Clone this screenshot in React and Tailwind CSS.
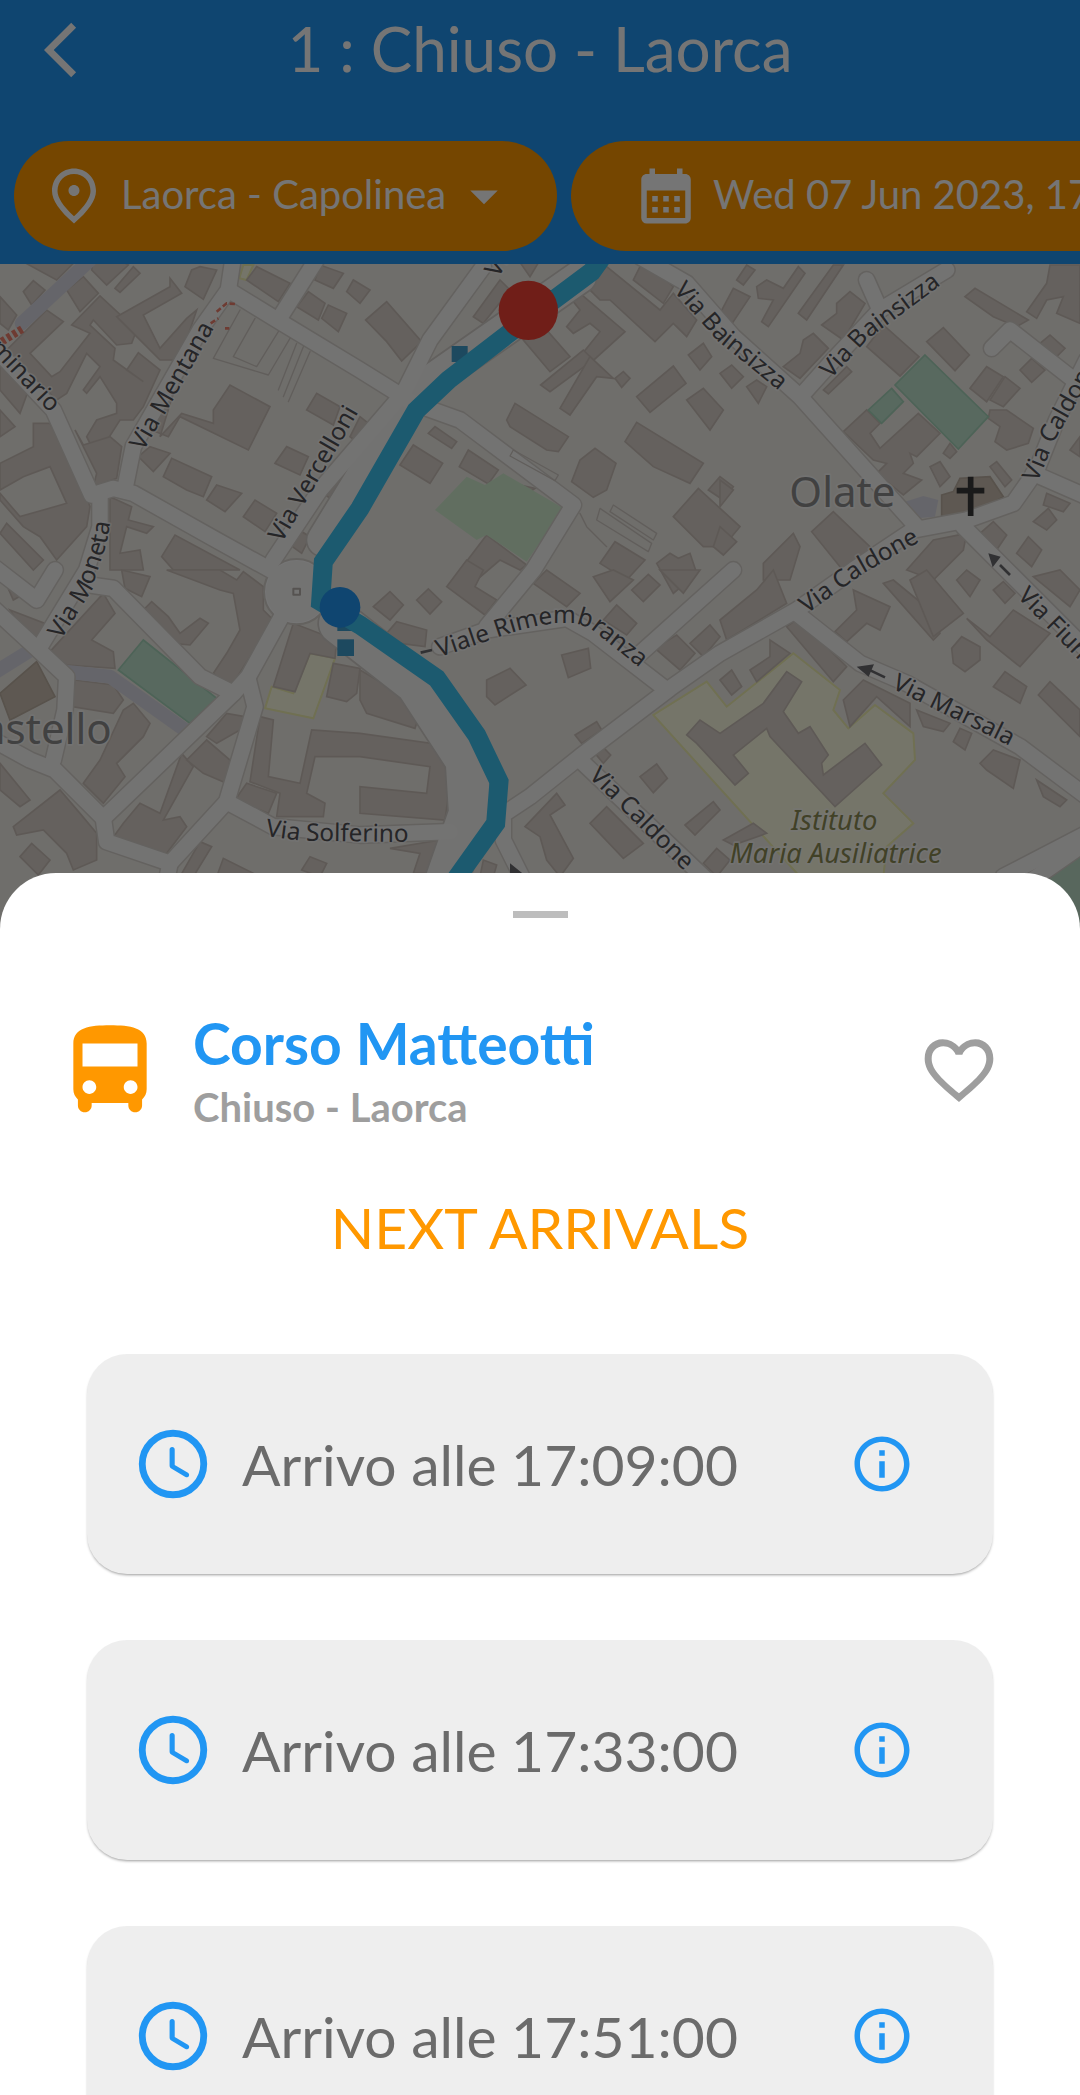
import { useState } from 'react';
import { MdArrowBackIos, MdArrowDropDown, MdCalendarMonth, MdInfoOutline, MdOutlineFmdGood } from 'react-icons/md';

const arrivals = ['17:09:00', '17:33:00', '17:51:00'];

const roads = [
    'M-20 260 L160 450 L275 705 L340 685 L400 700 L640 835 L830 940',
    'M700 -10 L685 90 L600 210 L400 560 L375 685',
    'M300 700 L300 800 L260 930 L120 1160',
    'M685 90 L840 185 L1080 330 L1240 430 L1380 480 L1720 735 L1600 930 L1460 1100',
    'M835 180 L955 -10',
    'M820 900 L960 690 L1210 400 L1290 240 L1450 20',
    'M-20 1045 L110 1165 L200 1250 L195 1350 L160 1500',
    'M-20 920 L110 1020 L165 930',
    'M-20 1440 L90 1500 L165 1530 L310 1675 L320 1745 L510 1810 L680 1625 L765 1340 L745 1260',
    'M310 1675 L700 1300 L745 1250 L850 1060',
    'M270 975 L340 985 L600 1250 L700 1300',
    'M680 1625 L820 1700 L1080 1725 L1350 1715',
    'M510 1810 L470 2010',
    'M1320 1160 L1460 1110 L1700 1075 L1780 1120 L2000 1290',
    'M1910 1190 L2200 930',
    'M1500 1670 L1590 1610 L1740 1490 L2010 1285 L2160 1180 L2390 1050 L2560 930 L2740 810 L2900 780 L3040 730 L3110 630 L3170 480 L3260 300',
    'M1740 1500 L2120 1860',
    'M1510 1680 L1510 1740 L1570 1860',
    'M1920 -10 L2060 70 L2200 230 L2400 410 L2750 800',
    'M2410 400 L2500 300 L2640 150 L2600 60',
    'M2640 150 L2840 30',
    'M2975 265 L3030 210 L3260 390',
    'M3100 640 L3260 710',
    'M2890 800 L3020 930 L3260 1170',
    'M2390 1060 L2580 1210 L2720 1270 L3060 1460 L3260 1610',
    'M3010 1850 L3260 1720',
    'M3240 1760 L3040 1900',
];

const walkways = ['M270 0 L65 190', 'M195 1235 L330 1250 L555 1410', 'M-20 1240 L85 1175'];

const buildings = [
    // north-west block
    'M60 0 L230 0 L170 60 Z', 'M70 95 L100 62 L135 90 L95 135 Z', 'M0 110 L50 165 L25 210 L0 190 Z',
    'M200 90 L250 50 L295 100 L240 155 Z', 'M275 30 L320 75 L385 15 L360 0 L280 0 Z', 'M345 85 L400 20 L420 40 L360 97 Z',
    'M0 290 L140 150 L190 185 L90 280 L155 350 L180 335 L270 220 L215 195 L300 108 L410 210 L395 250 L350 255 L280 180 L270 195 L345 265 L340 300 L430 365 L380 330 L415 278 L480 330 L430 440 L400 480 L360 480 L290 590 L260 530 L290 480 L350 460 L350 430 L300 350 L260 400 L250 390 L300 320 L260 280 L200 400 L170 420 L100 350 L60 460 L0 390 Z',
    'M510 55 L545 100 L430 165 L480 265 L560 175 L590 150 L540 300 L480 300 L350 170 L510 80 Z',
    'M600 20 L650 30 L610 118 L555 80 L575 30 Z', 'M480 530 L545 460 L640 490 L640 450 L690 375 L810 440 L745 570 L540 470 L505 530 L430 500 L520 400 Z',
    'M740 60 L770 20 L870 70 L835 125 Z', 'M960 15 L1030 40 L1000 85 L945 60 Z', 'M890 140 L925 95 L975 130 L955 180 Z',
    'M965 175 L985 135 L1040 160 L1015 215 Z', 'M1040 95 L1060 60 L1110 90 L1080 130 Z', 'M920 450 L950 400 L1020 440 L1000 495 Z',
    'M825 610 L860 560 L925 590 L900 645 Z', 'M950 690 L975 640 L1025 660 L1000 720 Z', 'M730 770 L765 720 L830 760 L795 815 Z',
    'M850 840 L880 800 L930 830 L905 880 Z', 'M415 590 L450 560 L510 580 L460 635 Z', 'M490 650 L515 595 L635 650 L610 710 L560 690 Z',
    'M620 720 L650 675 L725 700 L675 755 Z', 'M100 490 L150 490 L250 680 L270 740 L260 800 L170 900 L120 830 L70 800 L0 720 L0 700 L60 770 L200 730 L150 620 L70 650 L0 690 L0 610 L100 560 Z',
    'M225 510 L290 640 L280 680 L350 655 L365 560 L330 530 L250 555 Z', 'M330 710 L395 740 L385 780 L460 800 L440 820 L380 800 L360 880 L420 870 L430 930 L330 930 Z',
    'M485 890 L525 825 L720 930 L520 930 Z', 'M0 820 L20 790 L130 900 L100 930 Z', 'M0 450 L45 500 L0 530 Z',
    // park side
    'M1097 180 L1160 125 L1265 245 L1205 303 L1160 245 Z', 'M1080 470 L1118 500 L1090 560 L1050 530 Z',
    'M1420 170 L1500 60 L1530 90 L1450 190 Z', 'M1555 0 L1620 0 L1590 50 Z', 'M1760 80 L1820 20 L1980 150 L2020 100 L2090 180 L2060 230 L2020 190 L1965 245 L1830 120 L1800 120 Z',
    'M1930 0 L2020 80 L1990 130 L1900 60 Z', 'M1700 100 L1740 100 L1875 215 L1770 310 L1740 290 L1800 215 L1770 190 L1720 220 L1700 200 L1740 150 Z',
    'M1570 240 L1640 210 L1710 290 L1650 335 Z', 'M1622 375 L1750 270 L1780 300 L1650 395 Z', 'M1680 445 L1770 290 L1840 355 L1790 350 L1710 465 Z', 'M1845 355 L1870 335 L1890 355 L1865 382 Z',
    'M1910 410 L2020 318 L2058 370 L1950 457 Z', 'M2060 420 L2110 385 L2170 450 L2130 510 Z', 'M2065 285 L2110 250 L2135 290 L2100 330 Z',
    'M1520 480 L1545 430 L1705 530 L1675 575 L1640 570 L1530 500 Z', 'M1875 545 L1910 487 L2110 610 L2070 670 L1960 620 Z',
    'M1715 665 L1740 600 L1785 565 L1848 610 L1820 690 L1780 712 Z', 'M1285 520 L1305 500 L1370 545 L1355 565 Z', 'M1200 615 L1240 555 L1328 610 L1290 670 Z',
    'M1378 620 L1405 570 L1495 630 L1465 672 Z', 'M1560 675 L1605 685 L1590 695 Z', 'M2020 770 L2095 685 L2220 800 L2170 860 L2110 860 Z',
    'M2125 690 L2160 650 L2200 680 L2170 720 Z', 'M1380 930 L1460 825 L1580 915 L1560 930 L1500 900 L1430 960 Z', 'M1800 910 L1845 845 L1935 900 L1880 960 Z',
    'M1970 910 L2010 880 L2035 895 L2070 880 L2090 940 L2020 1000 Z', 'M1340 980 L1400 900 L1450 930 L1425 980 L1490 1020 L1455 1065 Z',
    // north-east block
    'M2210 60 L2240 15 L2265 30 L2230 75 Z', 'M2160 160 L2200 85 L2250 110 L2190 200 Z', 'M2270 80 L2300 60 L2350 85 L2395 20 L2415 40 L2305 200 L2285 185 L2320 120 L2275 115 Z',
    'M2395 160 L2500 15 L2530 15 L2420 180 Z', 'M2465 195 L2510 160 L2510 130 L2550 95 L2595 130 L2530 240 Z', 'M2350 320 L2400 280 L2410 240 L2440 220 L2485 265 L2400 355 Z',
    'M2600 260 L2650 195 L2757 290 L2700 348 Z',
    'M2160 340 L2195 315 L2230 350 L2195 385 Z', 'M2240 380 L2270 360 L2300 380 L2275 430 Z', 'M2470 390 L2540 320 L2555 335 L2485 402 Z',
    'M2780 245 L2830 203 L2908 285 L2865 332 Z', 'M2895 110 L2925 85 L3085 180 L3050 200 L2980 170 Z',
    'M3080 155 L3140 70 L3150 15 L3240 15 L3240 190 L3170 160 L3190 110 L3140 120 L3110 175 Z', 'M3120 250 L3150 225 L3195 265 L3160 300 Z', 'M3060 330 L3095 295 L3135 330 L3095 367 Z',
    'M2910 385 L2960 320 L3010 350 L2960 425 Z', 'M2970 420 L3015 350 L3060 385 L3010 440 Z', 'M2970 450 L3020 450 L3100 505 L3085 550 L3020 570 L2985 545 L3000 500 L2965 475 Z',
    'M2530 515 L2600 450 L2640 490 L2610 520 L2640 565 L2755 460 L2820 520 L2750 590 L2730 580 L2740 610 L2710 640 L2765 660 L2710 705 L2630 640 L2660 610 L2620 600 Z',
    'M2830 580 L2850 550 L2870 575 L2850 595 Z', 'M2790 620 L2820 605 L2850 650 L2820 680 Z', 'M2970 620 L2990 605 L3035 660 L3015 680 Z', 'M3210 570 L3240 530 L3240 590 Z',
    'M2160 660 L2200 690 L2160 740 Z', 'M2160 800 L2210 845 L2170 885 L2140 860 Z', 'M2435 815 L2500 755 L2620 870 L2560 925 L2520 920 Z', 'M2290 910 L2380 820 L2400 860 L2370 960 L2290 960 Z',
    'M2720 930 L2800 840 L2900 820 L2890 870 L2800 960 Z', 'M2940 820 L2980 785 L3020 825 L2990 870 Z', 'M3100 785 L3145 745 L3170 780 L3140 810 Z', 'M3140 700 L3210 730 L3190 755 L3130 735 Z', 'M3050 880 L3085 830 L3125 870 L3095 920 Z',
    // south-west block
    'M145 1180 L310 1000 L345 1060 L275 1140 L340 1175 L345 1225 L200 1215 Z', 'M0 930 L60 960 L75 1000 L40 1020 Z', 'M30 1050 L160 1100 L120 1145 L50 1080 Z',
    'M365 930 L450 950 L425 1010 L375 985 Z', 'M430 1050 L455 1025 L505 1070 L540 1120 L600 1075 L625 1090 L570 1155 L520 1150 Z', 'M500 930 L660 930 L710 960 L730 935 L790 980 L790 1050 L820 1080 L690 1285 L640 1240 L680 1180 L720 1110 L700 1000 L660 990 Z',
    'M225 1260 L340 1275 L370 1320 L340 1360 L215 1340 Z', 'M250 1570 L300 1500 L370 1350 L400 1330 L450 1390 L430 1430 L350 1510 L375 1550 L310 1630 Z',
    'M0 1510 L90 1620 L60 1640 L0 1590 Z', 'M40 1700 L180 1590 L240 1660 L290 1720 L290 1800 L220 1830 L200 1780 L130 1710 L50 1725 Z', 'M60 1790 L95 1750 L150 1800 L115 1845 Z',
    'M330 1745 L370 1690 L420 1630 L480 1660 L545 1480 L580 1520 L490 1680 L540 1670 L560 1700 L500 1780 L340 1760 Z', 'M620 1430 L680 1360 L735 1370 L720 1410 L650 1450 Z', 'M560 1500 L620 1440 L690 1500 L680 1570 L610 1540 Z',
    'M820 1280 L880 1090 L1010 1140 L1005 1195 L930 1180 L885 1295 Z', 'M1000 1210 L1080 1225 L1070 1300 L1040 1325 L980 1310 Z', 'M780 1370 L820 1380 L805 1550 L900 1570 L935 1410 L1080 1420 L1365 1460 L1335 1680 L1080 1660 L1080 1580 L1280 1600 L1290 1520 L1080 1490 L945 1490 L920 1600 L975 1630 L970 1670 L830 1670 L840 1600 L750 1565 Z',
    'M705 1620 L740 1570 L830 1600 L805 1660 Z', 'M1080 1230 L1200 1300 L1265 1340 L1245 1405 L1100 1360 L1080 1320 Z', 'M650 1850 L670 1795 L780 1850 Z', 'M905 1830 L930 1790 L980 1810 L960 1850 Z', 'M540 1850 L600 1745 L635 1760 L580 1850 Z', 'M1170 1765 L1320 1740 L1290 1840 L1240 1840 L1260 1780 Z',
    // Viale Rimembranza
    'M1120 1040 L1170 995 L1210 1035 L1170 1080 Z', 'M1250 1020 L1285 987 L1325 1025 L1290 1062 Z', 'M1160 1120 L1190 1085 L1280 1110 L1275 1160 L1200 1150 Z', 'M1460 1260 L1530 1225 L1578 1275 L1485 1335 L1460 1310 Z',
    'M1685 1185 L1765 1165 L1772 1225 L1705 1253 Z', 'M1725 1425 L1790 1385 L1805 1410 L1745 1450 Z', 'M1785 1480 L1810 1462 L1832 1485 L1810 1510 Z', 'M1920 1550 L1970 1512 L2002 1555 L1960 1598 Z',
    'M1600 970 L1640 930 L1740 1000 L1700 1040 Z', 'M1780 950 L1840 930 L1900 960 L1830 1025 Z', 'M1895 990 L1945 943 L1980 975 L1930 1025 Z', 'M1810 1080 L1850 1035 L1910 1090 L1880 1125 Z', 'M1980 930 L2100 930 L2050 1000 Z',
    'M1965 1165 L2030 1125 L2085 1180 L2040 1230 Z', 'M2070 1150 L2130 1095 L2160 1130 L2110 1190 Z', 'M1575 1700 L1670 1600 L1695 1635 L1650 1665 L1720 1795 L1680 1850 L1640 1800 L1620 1730 Z',
    'M1770 1690 L1820 1640 L1930 1750 L1870 1795 Z', 'M2055 1695 L2140 1625 L2160 1650 L2085 1725 Z', 'M2110 1810 L2150 1765 L2190 1800 L2150 1850 Z', 'M1440 1850 L1450 1800 L1490 1815 L1480 1850 Z',
    // institute and Via Marsala
    'M2160 1420 L2290 1330 L2360 1235 L2405 1265 L2350 1355 L2395 1420 L2430 1400 L2485 1485 L2465 1510 L2470 1545 L2595 1450 L2645 1515 L2505 1640 L2310 1430 L2300 1405 L2200 1485 L2245 1540 L2205 1575 L2090 1450 L2060 1425 L2100 1380 Z',
    'M2160 1080 L2270 990 L2320 930 L2360 1030 L2180 1140 Z', 'M2250 1230 L2310 1190 L2310 1140 L2370 1180 L2270 1265 Z', 'M2360 1100 L2395 1075 L2540 1220 L2500 1265 Z', 'M2160 1260 L2195 1230 L2225 1280 L2195 1305 Z',
    'M2505 1115 L2570 1050 L2560 990 L2670 1040 L2640 1110 L2600 1090 L2540 1145 Z', 'M2530 1320 L2590 1260 L2730 1330 L2730 1400 L2630 1310 L2550 1400 Z', 'M2750 1350 L2850 1390 L2830 1415 L2770 1400 Z', 'M2860 1445 L2880 1405 L2915 1420 L2895 1470 Z',
    'M2940 1510 L2980 1470 L3060 1500 L3040 1585 L2960 1530 Z', 'M3110 1560 L3200 1620 L3180 1640 L3130 1610 Z', 'M2650 970 L2680 960 L2790 1050 L2820 1120 L2800 1140 Z', 'M2730 960 L2780 930 L2890 1060 L2800 1130 Z',
    'M2855 1165 L2885 1130 L2940 1160 L2940 1200 L2895 1235 L2860 1210 Z', 'M2980 1280 L3015 1235 L3080 1280 L3060 1330 Z', 'M2900 1075 L2970 1130 L3040 1050 L3150 1120 L3060 1220 L2960 1140 Z', 'M3115 1305 L3150 1265 L3240 1350 L3240 1430 Z',
    'M2870 960 L2900 930 L2940 960 L2910 1010 Z', 'M2980 990 L3010 965 L3045 1000 L3015 1030 Z', 'M3100 950 L3180 930 L3240 990 L3210 1040 Z', 'M2170 1740 L2260 1690 L2300 1720 L2200 1755 Z',
];

const streets = [
    { id: 'seminario', name: 'Seminario', d: 'M-180 110 L-20 280 L150 460', anchor: 'end' },
    { id: 'mentana', name: 'Via Mentana', d: 'M430 575 L685 130' },
    { id: 'vercelloni', name: 'Via Vercelloni', d: 'M845 850 L1120 380' },
    { id: 'vercelloni-n', name: 'Via Vercelloni', d: 'M1495 55 L1740 -365' },
    { id: 'moneta', name: 'Via Moneta', d: 'M183 1140 L270 1000 L320 850 L345 700' },
    { id: 'bainsizza-w', name: 'Via Bainsizza', d: 'M2020 92 L2150 240 L2420 460' },
    { id: 'bainsizza-e', name: 'Via Bainsizza', d: 'M2492 358 L2600 240 L2870 40' },
    { id: 'caldone-e', name: 'Via Caldone', d: 'M3112 668 L3165 540 L3320 270' },
    { id: 'caldone', name: 'Via Caldone', d: 'M2420 1062 L2590 940 L2820 810' },
    { id: 'caldone-s', name: 'Via Caldone', d: 'M1765 1550 L2110 1890' },
    { id: 'rimembranza', name: 'Viale Rimembranza', d: 'M1318 1192 L1480 1137 Q1700 1057 1780 1112 L1980 1272' },
    { id: 'marsala', name: 'Via Marsala', d: 'M2674 1284 L3100 1492' },
    { id: 'fiume', name: 'Via Fiume', d: 'M3050 1010 L3320 1285' },
    { id: 'solferino', name: 'Via Solferino', d: 'M796 1728 L900 1742 L1300 1747' },
];

const route = 'M1850 -70 L1775 35 L1520 225 L1345 360 L1248 452 L1080 745 L970 905 L962 1025 L1080 1095 L1310 1255 L1430 1425 L1497 1565 L1487 1690 L1380 1840 L1330 1910';

const RouteMap = () => (
    <svg viewBox="0 12 3240 1998" className="block h-auto w-full bg-[#f2efe9]" role="img" aria-label="Route map">
        <g fill="#ffffe5" stroke="#f3f3b4" strokeWidth="6">
            <path d="M2380 1180 L2520 1290 L2500 1350 L2545 1405 L2625 1335 L2740 1420 L2745 1500 L2650 1600 L2740 1690 L2660 1760 L2650 1850 L2400 1850 L1960 1365 L2120 1265 L2180 1340 Z" />
            <path d="M930 1180 L1005 1195 L940 1375 L795 1345 L815 1280 L880 1300 Z" />
            <path d="M730 15 L760 15 L740 60 L718 55 Z" />
        </g>
        <g fill="#dcd3cc" stroke="#cdc3bb" strokeWidth="5">
            {buildings.map((d) => <path key={d} d={d} />)}
        </g>
        <path d="M1400 650 L1455 675 L1510 640 L1580 680 L1690 745 L1580 905 L1460 825 L1430 840 L1305 750 Z" fill="#d4efd2" />
        <g fill="#bfe4d0" stroke="#a8d8bd" strokeWidth="5">
            <path d="M2775 285 L2965 470 L2875 567 L2685 375 Z" />
            <path d="M2675 385 L2710 425 L2645 490 L2605 450 Z" />
            <path d="M430 1140 L650 1315 L570 1390 L355 1230 Z" />
        </g>
        <path d="M3040 1850 L3240 1765 L3240 2010 L3160 2010 Z" fill="#bfe0cb" />
        <path d="M2715 725 L2770 708 L2815 720 L2805 770 L2750 775 Z" fill="#dddde8" />
        <path d="M2825 705 L2860 695 L2880 655 L2970 650 L3010 710 L2940 750 L2825 770 Z" fill="#cdc1b2" stroke="#bfb3a5" strokeWidth="5" />
        <path d="M0 1300 L110 1205 L165 1310 L30 1380 Z" fill="#cdc1b2" stroke="#bfb3a5" strokeWidth="5" />

        <g fill="none" strokeLinejoin="round" strokeLinecap="round">
            <path d="M1020 1090 L1250 1270 L1400 1500 L1410 1660 L1340 1860" stroke="#d5d1cc" strokeWidth="136" />
            <path d="M1740 50 L1240 400 L970 840" stroke="#d5d1cc" strokeWidth="106" />
            {walkways.map((d) => <path key={d} d={d} stroke="#dddde8" strokeWidth="42" />)}
            {roads.map((d) => <path key={d} d={d} stroke="#d9d5d0" strokeWidth="55" />)}
            <circle cx="890" cy="995" r="98" fill="#ffffff" stroke="#d9d5d0" strokeWidth="6" />
            <path d="M1020 1090 L1250 1270 L1400 1500 L1410 1660 L1340 1860" stroke="#f9f8f6" strokeWidth="126" />
            <path d="M1740 50 L1240 400 L970 840" stroke="#f9f8f6" strokeWidth="96" />
            {roads.map((d) => <path key={d} d={d} stroke="#fbfaf9" strokeWidth="46" />)}
            <circle cx="890" cy="995" r="92" fill="#fbfaf9" />
            <rect x="880" y="986" width="20" height="18" stroke="#bbb6b0" strokeWidth="6" />
            <g stroke="#d3cdc7" strokeWidth="4">
                <path d="M720 150 L640 295 L805 345 L870 235 M765 175 L700 290 L770 320 L835 215 M890 250 L835 390 M910 260 L850 410 M930 275 L865 425" />
                <path d="M1540 570 L1675 645 L1665 662 L1530 588 Z M1840 735 L1970 820 L1960 840 L1830 755 Z M1800 745 L1955 850 L1945 875 L1790 780 Z M1740 760 L1760 800 L1820 860" />
            </g>
        </g>
        <g fill="none" stroke="#f0826e">
            <path d="M5 245 L70 205" strokeWidth="24" strokeDasharray="12 8" />
            <path d="M632 190 L655 175 M650 155 L680 130 L705 132 M675 205 L688 205" strokeWidth="8" strokeDasharray="16 8" />
        </g>

        <g fill="#3f9fd0">
            <rect x="1355" y="258" width="48" height="48" />
            <rect x="1640" y="90" width="40" height="48" />
            <rect x="1012" y="1138" width="50" height="50" />
            <rect x="1012" y="1080" width="50" height="33" />
        </g>

        <g fill="#515156" stroke="#ffffff" strokeOpacity="0.6" strokeWidth="10" strokeLinejoin="round" fontSize="73" className="font-['Noto_Sans',sans-serif] [paint-order:stroke]">
            {streets.map((s) => (
                <g key={s.id}>
                    <path id={s.id} d={s.d} fill="none" stroke="none" />
                    <text textAnchor={s.anchor}>
                        <textPath href={`#${s.id}`} startOffset={s.anchor === 'end' ? '100%' : '0'}>{s.name}</textPath>
                    </text>
                </g>
            ))}
            <g fill="#8f8f8f" fontSize="126">
                <text x="2368" y="740">Olate</text>
                <text x="335" y="1453" textAnchor="end">Castello</text>
            </g>
            <g fill="#8f8f55" fontSize="82" fontStyle="italic" textAnchor="middle">
                <text x="2503" y="1710">Istituto</text>
                <text x="2507" y="1810">Maria Ausiliatrice</text>
            </g>
        </g>

        <g fill="none" stroke="#6b6b70" strokeWidth="8">
            <path d="M2600 1226 L2655 1252 M3000 915 L3030 945 M1262 1178 L1296 1170" />
            <path d="M2570 1220 L2622 1213 L2606 1250 Z M2965 880 L3002 890 L2978 922 Z M1530 1810 L1570 1842 L1530 1842 Z" fill="#6b6b70" stroke="none" />
            <path d="M2912 650 V768 M2870 692 H2953" stroke="#3a3a3a" strokeWidth="17" />
        </g>

        <path d={route} fill="none" stroke="#3dc4f1" strokeWidth="57" />
        <circle cx="1585" cy="151" r="89" fill="#f44336" />
        <circle cx="1020" cy="1042" r="61" fill="#2196f3" />
    </svg>
);

const BusIcon = () => (
    <svg viewBox="0 0 24 24" fill="currentColor" className="size-[110px] shrink-0 text-[#ff9800]" aria-hidden="true">
        <path d="M4 16c0 .88.39 1.67 1 2.22v1.28c0 .83.67 1.5 1.5 1.5S8 20.33 8 19.5V19h8v.5c0 .82.67 1.5 1.5 1.5s1.5-.68 1.5-1.5v-1.28c.61-.55 1-1.34 1-2.22V6c0-3.5-3.58-4-8-4s-8 .5-8 4v10zm3.5 1c-.83 0-1.5-.67-1.5-1.5S6.67 14 7.5 14s1.5.67 1.5 1.5S8.33 17 7.5 17zm9 0c-.83 0-1.5-.67-1.5-1.5s.67-1.5 1.5-1.5 1.5.67 1.5 1.5-.67 1.5-1.5 1.5zm1.5-6H6V6h12v5z" />
    </svg>
);

const HeartIcon = ({ filled }) => (
    <svg viewBox="894 511 246 246" fill="currentColor" className="size-[82px]" aria-hidden="true">
        <path
            fillRule={filled ? 'nonzero' : 'evenodd'}
            d="M1017 562C1004 548 987 539 968 539C937 539 914 563 914 597C914 643 960 677 1017 727C1074 677 1120 643 1120 597C1120 563 1097 539 1066 539C1047 539 1030 548 1017 562ZM1007 585C1001 570 986 560 970 560C950 560 935 575 935 597C935 632 970 660 1017 701C1064 660 1099 632 1099 597C1099 575 1084 560 1064 560C1048 560 1033 570 1027 585Z"
        />
    </svg>
);

const ClockIcon = () => (
    <svg viewBox="0 0 24 24" className="size-[82px] shrink-0 text-[#2196f3]" aria-hidden="true">
        <circle cx="12" cy="12" r="9" fill="none" stroke="currentColor" strokeWidth="2" />
        <path fill="currentColor" d="M11.78 7h-.06c-.4 0-.72.32-.72.72v4.72c0 .35.18.68.49.86l4.15 2.49c.34.2.78.1.98-.24.21-.34.1-.79-.25-.99l-3.87-2.3V7.72c0-.4-.32-.72-.72-.72z" />
    </svg>
);

const ArrivalCard = ({ time }) => (
    <li className="flex h-[220px] items-center rounded-[40px] bg-[#eeeeee] pr-[78px] pl-[45px] shadow-[0_2px_3px_-1px_rgba(0,0,0,0.4)]">
        <ClockIcon />
        <span className="ml-7 flex-1 text-[57px] leading-16 text-[#6b6b6b]">Arrivo alle {time}</span>
        <button type="button" aria-label={`Details for ${time}`} className="text-[#2196f3]">
            <MdInfoOutline className="size-[66px]" />
        </button>
    </li>
);

const App = () => {
    const [stop, setStop] = useState('Laorca - Capolinea');
    const [favorite, setFavorite] = useState(false);

    return (
        <main className="flex h-screen flex-col overflow-hidden bg-white font-['Lato',sans-serif]">
            <div className="relative shrink-0">
                <header className="bg-[#2196f3] text-white">
                    <div className="flex h-[100px] items-center px-11">
                        <button type="button" aria-label="Back">
                            <MdArrowBackIos className="size-[66px]" />
                        </button>
                        <h1 className="flex-1 pb-1 text-center text-[62px] leading-none">1 : Chiuso - Laorca</h1>
                        <div className="w-[66px]" />
                    </div>
                    <div className="flex gap-[14px] overflow-hidden pt-[41px] pb-[13px] pl-[14px] text-[40px] whitespace-nowrap">
                        <label className="flex h-[110px] shrink-0 items-center rounded-full bg-[#ff9800] pr-10 pl-[27px]">
                            <MdOutlineFmdGood className="mr-[14px] size-[66px]" />
                            <select
                                aria-label="Stop"
                                value={stop}
                                onChange={(e) => setStop(e.target.value)}
                                className="appearance-none bg-transparent pb-1"
                            >
                                <option>Laorca - Capolinea</option>
                                <option>Corso Matteotti</option>
                            </select>
                            <MdArrowDropDown className="ml-1 size-[66px]" />
                        </label>
                        <button type="button" className="flex h-[110px] shrink-0 items-center rounded-full bg-[#ff9800] px-[62px]">
                            <MdCalendarMonth className="mr-[14px] size-[66px]" />
                            <span className="pb-1">Wed 07 Jun 2023, 17:00</span>
                        </button>
                    </div>
                </header>
                <RouteMap />
                <div className="absolute inset-0 bg-black/54" />
            </div>

            <section className="relative -mt-[57px] grow rounded-t-[56px] bg-white pt-[38px]">
                <div className="mx-auto h-[7px] w-[55px] bg-[#bdbdbd]" />
                <div className="mt-[85px] flex items-center pr-20 pl-[55px]">
                    <BusIcon />
                    <div className="ml-7 flex-1 pt-2 font-bold">
                        <h2 className="text-[57px] leading-16 text-[#2196f3]">Corso Matteotti</h2>
                        <p className="text-[40px] leading-16 text-[#9e9e9e]">Chiuso - Laorca</p>
                    </div>
                    <button type="button" aria-label="Favorite" onClick={() => setFavorite(!favorite)} className="text-[#9e9e9e]">
                        <HeartIcon filled={favorite} />
                    </button>
                </div>
                <h3 className="mt-14 text-center text-[57px] leading-16 text-[#ff9800]">NEXT ARRIVALS</h3>
                <ul className="mt-[95px] flex flex-col gap-[66px] px-[87px]">
                    {arrivals.map((time) => <ArrivalCard key={time} time={time} />)}
                </ul>
            </section>
        </main>
    );
};

export default App;
